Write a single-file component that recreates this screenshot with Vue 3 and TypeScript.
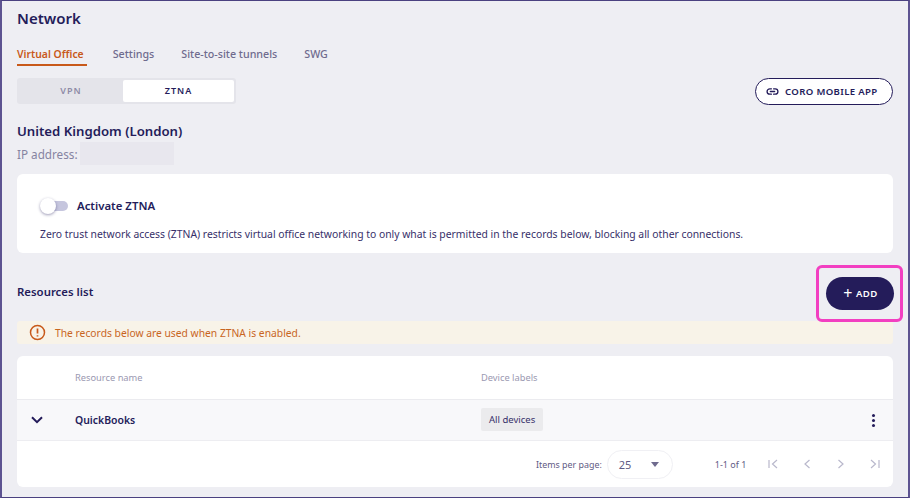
<script setup lang="ts">
const tabs: string[] = ['Virtual Office', 'Settings', 'Site-to-site tunnels', 'SWG']
</script>

<template>
  <div class="frame">
    <h1 class="title">Network</h1>
    <nav class="tabs">
      <span v-for="(t, i) in tabs" :key="t" class="tab" :class="{ active: i === 0 }">{{ t }}</span>
    </nav>
    <div class="toolbar">
      <div class="seg">
        <span class="seg-item">VPN</span>
        <span class="seg-item on">ZTNA</span>
      </div>
      <button class="mobile">
        <svg width="13" height="13" viewBox="0 0 24 24" fill="none" stroke="#241c5a" stroke-width="2.4" stroke-linecap="round">
          <path d="M10 7H7a5 5 0 0 0 0 10h3M14 7h3a5 5 0 0 1 0 10h-3M8 12h8" />
        </svg>
        CORO MOBILE APP
      </button>
    </div>
    <h2 class="loc">United Kingdom (London)</h2>
    <div class="ip">IP address:<span class="blur"></span></div>
    <section class="card">
      <div class="switch-row">
        <span class="switch"><i class="track"></i><i class="thumb"></i></span>
        <span class="switch-label">Activate ZTNA</span>
      </div>
      <p class="desc">Zero trust network access (ZTNA) restricts virtual office networking to only what is permitted in the records below, blocking all other connections.</p>
    </section>
    <div class="list-head">
      <h3 class="list-title">Resources list</h3>
      <div class="add-wrap">
        <button class="add"><span class="plus">+</span>ADD</button>
      </div>
    </div>
    <div class="notice">
      <svg width="17" height="17" viewBox="0 0 17 17" fill="none" stroke="#c8591a" stroke-width="1.5">
        <circle cx="8.5" cy="8.5" r="7" />
        <path d="M8.5 4.6v4.8M8.5 11.2v1.4" stroke-width="1.7" />
      </svg>
      The records below are used when ZTNA is enabled.
    </div>
    <section class="table">
      <div class="row head">
        <span class="c-name">Resource name</span>
        <span class="c-label">Device labels</span>
      </div>
      <div class="row body">
        <span class="c-arrow">
          <svg width="12" height="8" viewBox="0 0 12 8" fill="none" stroke="#241c5a" stroke-width="2">
            <path d="M1 1.2l5 5 5-5" />
          </svg>
        </span>
        <span class="c-name strong">QuickBooks</span>
        <span class="c-label"><span class="chip">All devices</span></span>
        <span class="dots"><i></i><i></i><i></i></span>
      </div>
      <div class="foot">
        <span class="ipp">Items per page:</span>
        <span class="select">25<i class="caret"></i></span>
        <span class="range">1-1 of 1</span>
        <span class="pager">
          <svg width="12" height="12" viewBox="0 0 12 12" fill="none" stroke="#b9b8cc" stroke-width="1.2"><path d="M2 2v8M10 2L5.5 6l4.5 4" /></svg>
          <svg width="12" height="12" viewBox="0 0 12 12" fill="none" stroke="#b9b8cc" stroke-width="1.2"><path d="M8.5 2L4 6l4.5 4" /></svg>
          <svg width="12" height="12" viewBox="0 0 12 12" fill="none" stroke="#b9b8cc" stroke-width="1.2"><path d="M3.5 2L8 6l-4.5 4" /></svg>
          <svg width="12" height="12" viewBox="0 0 12 12" fill="none" stroke="#b9b8cc" stroke-width="1.2"><path d="M2 2l4.5 4L2 10M10 2v8" /></svg>
        </span>
      </div>
    </section>
  </div>
</template>

<style>
html, body { margin: 0; background: #fff; }
</style>

<style scoped>
.frame {
  box-sizing: border-box;
  width: 910px;
  height: 498px;
  background: #eeeef3;
  border-left: 2px solid #5d5391;
  border-right: 2px solid #5d5391;
  border-top: 1px solid #4a4180;
  border-bottom: 1px solid #4a4180;
  padding: 7px 15px 0 15px;
  font-family: "Noto Sans", "Open Sans", sans-serif;
  color: #241c5a;
  overflow: hidden;
}
.title { margin: 0; font-size: 15px; line-height: 20px; font-weight: 600; }
.tabs { display: flex; gap: 27px; margin-top: 17px; height: 33px; }
.tab { font-size: 10.7px; font-weight: 500; line-height: 19px; color: #6f6b8e; height: 21px; box-sizing: border-box; }
.tab.active { color: #c8591a; border-bottom: 2px solid #c8591a; padding-right: 3px; margin-right: -1px; font-weight: 600; font-size: 10.4px; }
.toolbar { display: flex; justify-content: space-between; align-items: center; height: 26px; }
.seg { display: flex; width: 219px; height: 26px; box-sizing: border-box; padding: 2px; background: #e4e4ea; border-radius: 3px; }
.seg-item { flex: 0 0 104px; text-align: center; font-size: 9px; font-weight: 600; letter-spacing: 1px; line-height: 22px; color: #8d8aa6; }
.seg-item.on { flex: 0 0 111px; background: #fff; color: #241c5a; border-radius: 2px; }
.mobile {
  display: flex; align-items: center; gap: 6px; box-sizing: border-box; height: 27px; width: 138px;
  padding: 0 0 0 10px; background: #fff; border: 1.5px solid #241c5a; border-radius: 14px;
  font: 600 9.6px "Noto Sans", sans-serif; letter-spacing: 0.35px; color: #241c5a; white-space: nowrap;
}
.loc { margin: 18px 0 0; font-size: 13.2px; line-height: 18px; font-weight: 600; }
.ip { display: flex; align-items: center; font-size: 11.7px; line-height: 22px; height: 23px; margin-top: 2px; color: #8683a1; }
.blur { display: block; width: 94px; height: 23px; background: #e8e7ee; margin-left: 2px; }
.card { margin-top: 9px; height: 79px; box-sizing: border-box; background: #fff; border-radius: 6px; padding: 21px 0 0 23px; }
.switch-row { display: flex; align-items: center; height: 20px; }
.switch { position: relative; display: block; width: 28px; height: 16px; margin-top: 1px; }
.track { position: absolute; left: 6px; top: 3px; width: 22px; height: 10px; border-radius: 5px; background: #c6c6de; }
.thumb { position: absolute; left: 0; top: 0; width: 16px; height: 16px; border-radius: 50%; background: #fff; box-shadow: 0 1px 3px rgba(36, 28, 90, 0.45); }
.switch-label { margin-left: 9px; font-size: 11.4px; font-weight: 600; }
.desc { margin: 11px 0 0; font-size: 10.36px; line-height: 16px; color: #37306a; white-space: nowrap; }
.list-head { display: flex; justify-content: space-between; align-items: flex-start; height: 68px; }
.list-title { margin: 30px 0 0; font-size: 11.4px; line-height: 18px; font-weight: 600; }
.add-wrap { box-sizing: border-box; width: 87px; height: 57px; margin: 12px -10px 0 0; border: 3px solid #f23fc1; border-radius: 6px; padding: 9px 0 0 7px; position: relative; }
.add { display: flex; align-items: center; justify-content: center; gap: 3px; width: 68px; height: 33px; border: 0; border-radius: 17px; background: #241c5a; color: #fff; font: 600 9.6px "Noto Sans", sans-serif; letter-spacing: 0.4px; padding: 0 0 0 1px; }
.plus { font-size: 16px; font-weight: 400; line-height: 15px; }
.notice { display: flex; align-items: center; gap: 9px; box-sizing: border-box; height: 23px; padding-left: 12px; background: #f8f3e8; border-radius: 3px; font-size: 10.3px; color: #c8651f; }
.table { margin-top: 12px; background: #fff; border-radius: 6px; height: 131px; overflow: hidden; }
.row { position: relative; display: flex; align-items: center; }
.head { height: 44px; border-bottom: 1px solid #ebebef; font-size: 9.3px; color: #9a98b1; box-sizing: border-box; }
.body { height: 41px; box-sizing: border-box; background: #f8f8fa; border-bottom: 1px solid #ededf1; }
.c-arrow { position: absolute; left: 14px; top: 16px; display: block; line-height: 0; }
.c-name { margin-left: 58px; width: 406px; flex: none; }
.strong { font-size: 10.45px; font-weight: 600; }
.chip { display: block; background: #ebebed; border-radius: 2px; padding: 0 8px; font-size: 9.5px; line-height: 23px; color: #37306a; margin-top: -1px; }
.dots { position: absolute; right: 18px; top: 14px; display: flex; flex-direction: column; gap: 2px; }
.dots i { display: block; width: 3px; height: 3px; border-radius: 50%; background: #241c5a; }
.foot { display: flex; align-items: center; height: 46px; padding-left: 519px; font-size: 8.9px; color: #5f5b84; }
.ipp { white-space: nowrap; }
.select { position: relative; display: block; box-sizing: border-box; margin-left: 5px; width: 66px; height: 29px; border: 1px solid #f0f0f4; border-radius: 15px; padding-left: 11px; line-height: 27px; font-size: 11px; color: #5f5b84; }
.caret { position: absolute; left: 43px; top: 11px; width: 0; height: 0; border: 4px solid transparent; border-top: 5px solid #6f6b8e; }
.range { margin-left: 42px; white-space: nowrap; font-size: 9px; }
.pager { display: flex; gap: 22px; margin-left: 21px; }
.pager svg { display: block; }
</style>
